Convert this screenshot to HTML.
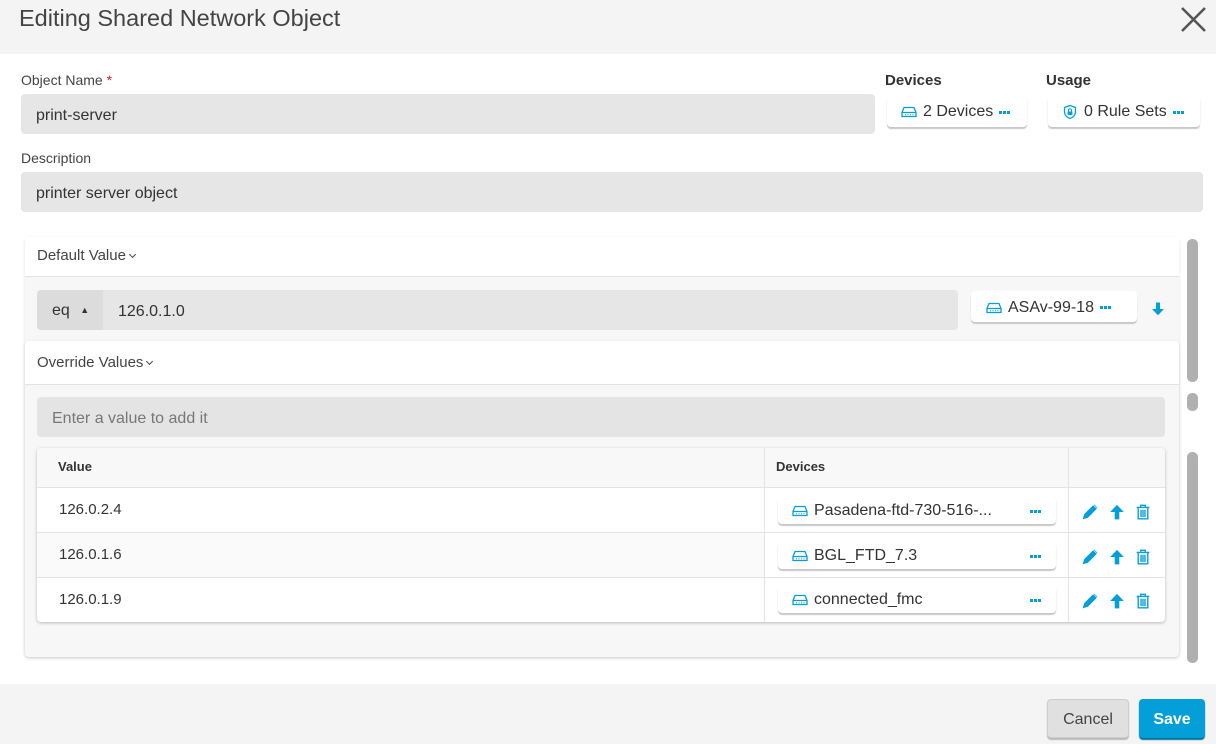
<!DOCTYPE html>
<html><head><style>
*{box-sizing:border-box;margin:0;padding:0}
body{width:1216px;height:744px;position:relative;background:#fff;font-family:"Liberation Sans",sans-serif;color:#333;overflow:hidden;font-size:15px}
.a{position:absolute}
.inp{position:absolute;background:#e6e6e6;border-radius:4px;padding-left:15px;padding-top:3px;display:flex;align-items:center;font-size:16px;color:#333}
.lbl{position:absolute;font-size:14px;color:#444}
.btn{position:absolute;background:#fff;border-radius:4px;box-shadow:0 2px 1px 0 #c8c8c8;display:flex;align-items:center;font-size:16px;color:#333;padding-top:2px}
.dots{display:inline-flex;gap:1px}
.dots i{display:block;width:3px;height:3px;background:#049fd9}
.row{position:absolute;left:0;width:1128px;border-top:1px solid #e3e3e3;height:45px}
.cell{position:absolute;font-size:15px;color:#333}
.chev{display:inline-block;width:5px;height:5px;border-right:1px solid #444;border-bottom:1px solid #444;transform:rotate(45deg);position:relative;top:-3px;margin-left:4px}
</style></head><body>
<svg width="0" height="0" style="position:absolute"><defs>
<symbol id="dev" viewBox="0 0 16 12"><path d="M3 1.5h10l2 5v4H1v-4z M1 6.5h14" fill="none" stroke="#049fd9" stroke-width="1.3"/><path d="M4 8.7h1M6.5 8.7h1M9 8.7h1M11.5 8.7h1" stroke="#049fd9" stroke-width="1"/></symbol>
<symbol id="pen" viewBox="0 0 14 14"><path d="M1 13l1.2-4 7.5-7.5 2.8 2.8-7.5 7.5z M10.5 0.7l2.8 2.8" fill="#049fd9" stroke="#049fd9" stroke-width="0.6"/></symbol>
<symbol id="up" viewBox="0 0 14 14"><path d="M7 0.8L1 7h4v6.5h4V7h4z" fill="#049fd9"/></symbol>
<symbol id="tr" viewBox="0 0 14 14"><path d="M1.5 3h11M5 3V1.2h4V3M2.8 3.5v9.5h8.4V3.5M5.3 5v6.5M7 5v6.5M8.7 5v6.5" fill="none" stroke="#049fd9" stroke-width="1.2"/></symbol>
</defs></svg>

<div class="a" style="left:0;top:0;width:1216px;height:54px;background:#f4f4f4"></div>
<div class="a" style="left:19px;top:5px;font-size:23.5px;color:#444">Editing Shared Network Object</div>
<svg class="a" style="left:1180px;top:6px" width="27" height="27"><path d="M2 2L25 25M25 2L2 25" stroke="#555" stroke-width="2.6"/></svg>

<div class="lbl" style="left:21px;top:72px">Object Name <span style="color:#cf2030">*</span></div>
<div class="inp" style="left:21px;top:94px;width:854px;height:40px">print-server</div>
<div class="lbl" style="left:885px;top:72px;font-weight:bold;color:#333;font-size:15px">Devices</div>
<div class="lbl" style="left:1046px;top:72px;font-weight:bold;color:#333;font-size:15px">Usage</div>
<div class="btn" style="left:887px;top:95px;width:140px;height:32px;padding-left:14px"><svg width="16" height="12"><use href="#dev"/></svg><span style="margin:0 6px 0 6px">2 Devices</span><span class="dots"><i></i><i></i><i></i></span></div>
<div class="btn" style="left:1048px;top:95px;width:152px;height:32px;padding-left:14px"><svg width="16" height="16" viewBox="0 0 16 16"><path d="M8 1.5l5.5 2v4c0 3.5-2.5 6-5.5 7-3-1-5.5-3.5-5.5-7v-4z" fill="none" stroke="#049fd9" stroke-width="1.3"/><rect x="5.6" y="7.5" width="4.8" height="3.5" fill="#049fd9"/><path d="M6.5 7.5V6.3a1.5 1.5 0 013 0v1.2" fill="none" stroke="#049fd9"/></svg><span style="margin:0 6px 0 6px">0 Rule Sets</span><span class="dots"><i></i><i></i><i></i></span></div>

<div class="lbl" style="left:21px;top:150px">Description</div>
<div class="inp" style="left:21px;top:172px;width:1182px;height:40px">printer server object</div>

<div class="a" style="left:25px;top:237px;width:1154px;height:420px;background:#f7f7f7;border-radius:4px;box-shadow:0 1px 3px rgba(0,0,0,.12)"></div>
<div class="a" style="left:25px;top:237px;width:1154px;height:40px;background:#fff;border-bottom:1px solid #e3e3e3"></div>
<div class="a" style="left:37px;top:247px;font-size:15px;color:#444">Default Value<span class="chev"></span></div>
<div class="a" style="left:37px;top:290px;width:66px;height:40px;background:#dcdcdc;border-radius:4px 0 0 4px;font-size:16px;padding:12px 0 0 15px">eq <span style="font-size:9px;position:relative;top:-2px;margin-left:6px">&#9650;</span></div>
<div class="inp" style="left:103px;top:290px;width:855px;height:40px;border-radius:0 4px 4px 0">126.0.1.0</div>
<div class="btn" style="left:971px;top:291px;width:166px;height:31px;padding-left:15px"><svg width="16" height="12"><use href="#dev"/></svg><span style="margin:0 6px 0 6px">ASAv-99-18</span><span class="dots"><i></i><i></i><i></i></span></div>
<svg class="a" style="left:1151px;top:302px" width="14" height="14"><path d="M7 13.2L1 7h4V0.5h4V7h4z" fill="#049fd9"/></svg>

<div class="a" style="left:25px;top:341px;width:1154px;height:316px;background:#f7f7f7;border-radius:4px;box-shadow:0 1px 3px rgba(0,0,0,.12)"></div>
<div class="a" style="left:25px;top:341px;width:1154px;height:44px;background:#fff;border-bottom:1px solid #e3e3e3;border-radius:4px 4px 0 0"></div>
<div class="a" style="left:37px;top:354px;font-size:15px;color:#444">Override Values<span class="chev"></span></div>
<div class="inp" style="left:37px;top:397px;width:1128px;height:40px;background:#e4e4e4;color:#777">Enter a value to add it</div>

<div class="a" style="left:37px;top:448px;width:1128px;height:174px;background:#fff;border-radius:4px;box-shadow:0 1px 3px rgba(0,0,0,.25);overflow:hidden">
 <div class="a" style="left:0;top:0;width:1128px;height:39px;background:#f8f8f8"></div>
 <div class="cell" style="left:21px;top:11px;font-weight:bold;font-size:13px">Value</div>
 <div class="cell" style="left:739px;top:11px;font-weight:bold;font-size:13px">Devices</div>
 <div class="a" style="left:727px;top:0;width:1px;height:174px;background:#e3e3e3"></div>
 <div class="a" style="left:1031px;top:0;width:1px;height:174px;background:#e3e3e3"></div>
 <div class="row" style="top:39px"></div><div class="row" style="top:84px;background:#fafafa;left:0;width:727px"></div><div class="row" style="top:84px"></div><div class="row" style="top:129px"></div>
 <div class="cell" style="left:22px;top:53px">126.0.2.4</div>
 <div class="cell" style="left:22px;top:98px">126.0.1.6</div>
 <div class="cell" style="left:22px;top:143px">126.0.1.9</div>
</div>
<div class="btn" style="left:778px;top:496px;width:278px;height:28px;padding-left:14px"><svg width="16" height="12"><use href="#dev"/></svg><span style="margin-left:6px;width:216px">Pasadena-ftd-730-516-...</span><span class="dots"><i></i><i></i><i></i></span></div>
<div class="btn" style="left:778px;top:541px;width:278px;height:28px;padding-left:14px"><svg width="16" height="12"><use href="#dev"/></svg><span style="margin-left:6px;width:216px">BGL_FTD_7.3</span><span class="dots"><i></i><i></i><i></i></span></div>
<div class="btn" style="left:778px;top:585px;width:278px;height:28px;padding-left:14px"><svg width="16" height="12"><use href="#dev"/></svg><span style="margin-left:6px;width:216px">connected_fmc</span><span class="dots"><i></i><i></i><i></i></span></div>
<div class="a" style="left:1082px;top:504px"><svg width="16" height="16" viewBox="0 0 14 14"><use href="#pen"/></svg><svg width="16" height="16" viewBox="0 0 14 14" style="margin-left:11px"><use href="#up"/></svg><svg width="16" height="16" viewBox="0 0 14 14" style="margin-left:10px"><use href="#tr"/></svg></div>
<div class="a" style="left:1082px;top:549px"><svg width="16" height="16" viewBox="0 0 14 14"><use href="#pen"/></svg><svg width="16" height="16" viewBox="0 0 14 14" style="margin-left:11px"><use href="#up"/></svg><svg width="16" height="16" viewBox="0 0 14 14" style="margin-left:10px"><use href="#tr"/></svg></div>
<div class="a" style="left:1082px;top:593px"><svg width="16" height="16" viewBox="0 0 14 14"><use href="#pen"/></svg><svg width="16" height="16" viewBox="0 0 14 14" style="margin-left:11px"><use href="#up"/></svg><svg width="16" height="16" viewBox="0 0 14 14" style="margin-left:10px"><use href="#tr"/></svg></div>

<div class="a" style="left:1187px;top:239px;width:11px;height:143px;background:#b0b0b0;border-radius:5px"></div>
<div class="a" style="left:1187px;top:393px;width:11px;height:18px;background:#b0b0b0;border-radius:5px"></div>
<div class="a" style="left:1187px;top:452px;width:11px;height:211px;background:#b0b0b0;border-radius:5px"></div>

<div class="a" style="left:0;top:684px;width:1216px;height:60px;background:#f4f4f4"></div>
<div class="a" style="left:1047px;top:699px;width:82px;height:39px;background:#e0e0e0;border:1px solid #ccc;border-radius:4px;box-shadow:0 2px 1px #bbb;font-size:16px;color:#444;text-align:center;line-height:39px">Cancel</div>
<div class="a" style="left:1139px;top:699px;width:66px;height:39px;background:#049fd9;border-radius:4px;box-shadow:0 2px 1px #0375a0;font-size:16px;color:#fff;font-weight:bold;text-align:center;line-height:41px">Save</div>
</body></html>
